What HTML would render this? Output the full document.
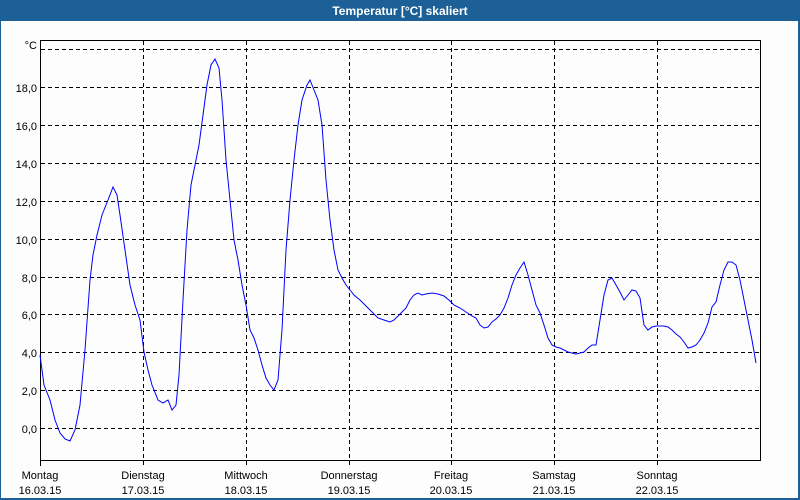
<!DOCTYPE html>
<html><head><meta charset="utf-8"><style>
html,body{margin:0;padding:0;width:800px;height:500px;overflow:hidden;background:#fcfdfc;font-family:"Liberation Sans",sans-serif}
</style></head><body>
<svg width="800" height="500" xmlns="http://www.w3.org/2000/svg" style="position:absolute;left:0;top:0">
<rect x="0" y="0" width="800" height="500" fill="#1c6097"/>
<rect x="1" y="21" width="797" height="477" fill="#fcfdfc"/>
<text x="400" y="15" text-anchor="middle" font-family="Liberation Sans, sans-serif" font-size="12" font-weight="bold" fill="#fff">Temperatur [°C] skaliert</text>
<g stroke="#000" stroke-width="1" stroke-dasharray="4,3" fill="none">
<line x1="41" y1="49.5" x2="760" y2="49.5"/>
<line x1="41" y1="87.5" x2="760" y2="87.5"/>
<line x1="41" y1="125.5" x2="760" y2="125.5"/>
<line x1="41" y1="163.5" x2="760" y2="163.5"/>
<line x1="41" y1="201.5" x2="760" y2="201.5"/>
<line x1="41" y1="239.5" x2="760" y2="239.5"/>
<line x1="41" y1="277.5" x2="760" y2="277.5"/>
<line x1="41" y1="314.5" x2="760" y2="314.5"/>
<line x1="41" y1="352.5" x2="760" y2="352.5"/>
<line x1="41" y1="390.5" x2="760" y2="390.5"/>
<line x1="41" y1="428.5" x2="760" y2="428.5"/>
<line x1="143.5" y1="41" x2="143.5" y2="466"/>
<line x1="246.5" y1="41" x2="246.5" y2="466"/>
<line x1="349.5" y1="41" x2="349.5" y2="466"/>
<line x1="451.5" y1="41" x2="451.5" y2="466"/>
<line x1="554.5" y1="41" x2="554.5" y2="466"/>
<line x1="657.5" y1="41" x2="657.5" y2="466"/>
</g>
<path d="M40.5 40.5H760.5V460.5H40.5Z M40.5 460.5V466" stroke="#000" stroke-width="1" fill="none"/>
<g font-family="Liberation Sans, sans-serif" font-size="11" fill="#000" text-anchor="end">
<text x="37" y="49">°C</text>
<text x="37" y="92">18,0</text>
<text x="37" y="130">16,0</text>
<text x="37" y="168">14,0</text>
<text x="37" y="206">12,0</text>
<text x="37" y="244">10,0</text>
<text x="37" y="282">8,0</text>
<text x="37" y="319">6,0</text>
<text x="37" y="357">4,0</text>
<text x="37" y="395">2,0</text>
<text x="37" y="433">0,0</text>
</g>
<g font-family="Liberation Sans, sans-serif" font-size="11" fill="#000" text-anchor="middle">
<text x="40" y="479">Montag</text><text x="40" y="494">16.03.15</text>
<text x="143" y="479">Dienstag</text><text x="143" y="494">17.03.15</text>
<text x="246" y="479">Mittwoch</text><text x="246" y="494">18.03.15</text>
<text x="349" y="479">Donnerstag</text><text x="349" y="494">19.03.15</text>
<text x="451" y="479">Freitag</text><text x="451" y="494">20.03.15</text>
<text x="554" y="479">Samstag</text><text x="554" y="494">21.03.15</text>
<text x="657" y="479">Sonntag</text><text x="657" y="494">22.03.15</text>
</g>
<polyline fill="none" stroke="#0000ff" stroke-width="1" points="40,355 44,385 50,400 55,420 60,433 65,439 70,441 75,430 80,405 85,350 90,280 93,255 97,235 102,215 108,200 113,187 117,195 120,215 125,250 130,285 135,305 140,320 144,352 148,370 152,385 158,400 163,403 168,400 172,410 176,405 179,375 183,300 187,230 191,185 195,165 199,145 203,115 207,85 211,65 215,59 219,68 222,100 226,160 230,200 234,240 238,260 242,285 246,305 250,330 254,338 258,350 262,365 266,378 270,385 274,390 278,380 282,330 286,250 290,200 294,160 298,125 302,100 307,85 310,80 314,90 318,100 322,125 326,180 330,220 334,250 338,270 342,278 346,285 350,290 354,295 360,300 366,306 372,312 378,318 384,320 390,322 394,320 398,316 402,312 406,308 410,300 414,295 418,293 422,295 426,294 432,293 438,294 444,296 450,301 454,305 460,308 466,312 472,316 476,318 480,325 484,328 488,327 492,322 496,319 500,315 504,308 508,298 512,285 516,275 520,268 524,262 528,275 532,290 536,305 540,313 544,325 548,338 552,345 556,347 560,348 564,350 568,352 572,353 576,354 580,353 584,352 588,348 592,345 596,345 600,320 604,295 608,280 612,278 616,285 620,292 624,300 628,295 632,290 636,291 640,298 644,325 648,330 652,327 656,326 660,326 664,326 668,327 672,330 676,334 680,337 684,342 688,348 692,347 696,345 700,340 704,333 708,323 712,307 716,302 720,285 724,270 728,262 732,262 736,265 740,280 744,300 748,320 752,340 756,363"/>
</svg>
</body></html>
